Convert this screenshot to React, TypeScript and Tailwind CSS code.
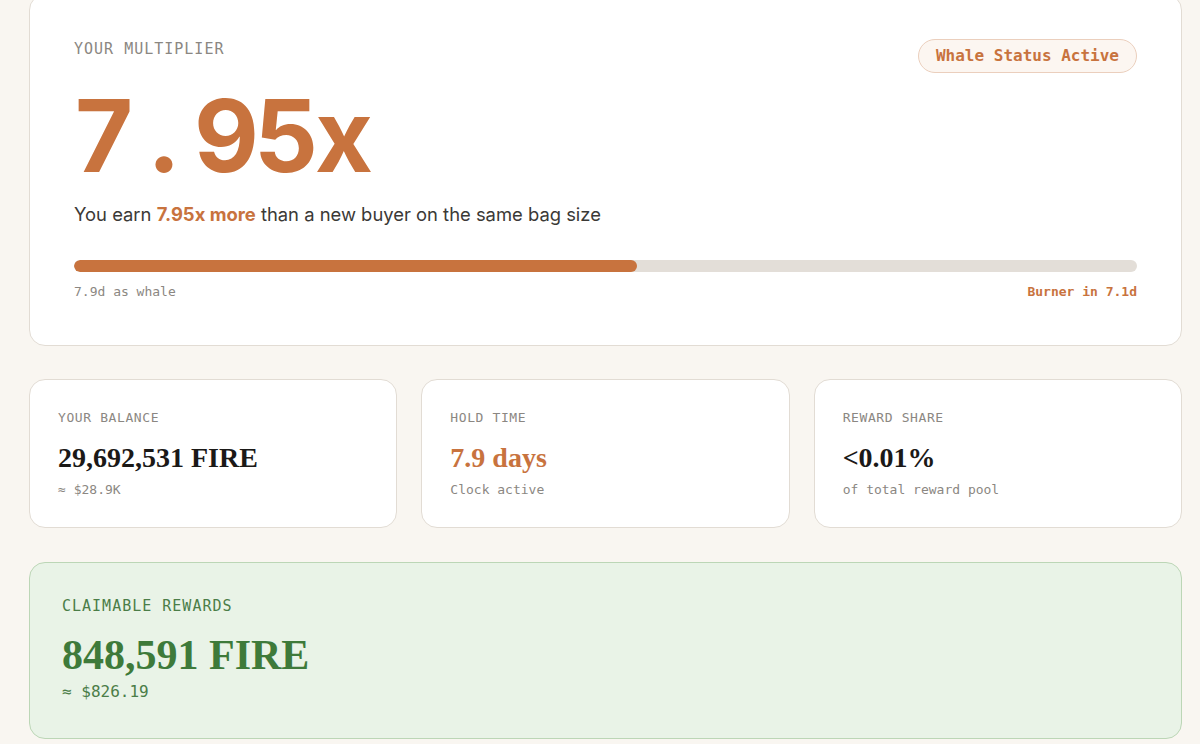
import * as React from "react";

const MONO = "font-['DejaVu_Sans_Mono','Liberation_Mono',monospace]";
const SANS = "font-['Inter','Liberation_Sans',sans-serif]";
const SERIF = "font-['Liberation_Serif','DejaVu_Serif',serif]";

const stats = [
  { label: "YOUR BALANCE", value: "29,692,531 FIRE", sub: "≈ $28.9K", accent: false },
  { label: "HOLD TIME", value: "7.9 days", sub: "Clock active", accent: true },
  { label: "REWARD SHARE", value: "<0.01%", sub: "of total reward pool", accent: false },
];

function StatCard({
  label,
  value,
  sub,
  accent,
}: {
  label: string;
  value: string;
  sub: string;
  accent: boolean;
}) {
  return (
    <div className="rounded-2xl border border-[#e2dcd4] bg-white px-7 pb-[27px] pt-7">
      <p className={`${MONO} text-[13px] leading-5 tracking-[0.6px] text-[#8b8782]`}>
        {label}
      </p>
      <p
        className={`${SERIF} mt-3 text-[28px] font-bold leading-9 ${
          accent ? "text-[#c8733e]" : "text-[#1b1917]"
        }`}
      >
        {value}
      </p>
      <p className={`${MONO} mt-1 text-[13px] leading-5 text-[#8b8782]`}>{sub}</p>
    </div>
  );
}

export default function App() {
  const progress = 53;
  const multiplier = "7.95x";

  return (
    <div className="min-h-screen overflow-hidden bg-[#f9f6f1] pb-10 pl-[29px] pr-[18px]">
      <section className="-mt-[6px] rounded-2xl border border-[#e2dcd4] bg-white px-11 pb-[43px] pt-11">
        <div className="flex items-start justify-between">
          <div>
            <p className={`${MONO} text-[15px] leading-5 tracking-[1px] text-[#8b8782]`}>
              YOUR MULTIPLIER
            </p>
            <p
              className={`${SANS} mt-[27px] flex text-[100px] font-bold leading-none text-[#c8733e]`}
            >
              {multiplier.split("").map((ch, i) => (
                <span key={i} className="inline-block w-[60px] text-center">
                  {ch}
                </span>
              ))}
            </p>
          </div>
          <span
            className={`${MONO} inline-flex h-[34px] items-center rounded-full border border-[#ebcfbd] bg-[#fcf6f1] px-[17px] text-base font-bold text-[#c8733e]`}
          >
            Whale Status Active
          </span>
        </div>

        <p className={`${SANS} mt-[14px] text-[18.4px] leading-7 text-[#3b3936]`}>
          You earn <span className="font-bold text-[#c8733e]">7.95x more</span> than a
          new buyer on the same bag size
        </p>

        <div className="mt-8 h-3 w-full overflow-hidden rounded-full bg-[#e3ded8]">
          <div
            className="h-full rounded-full bg-[#c8733e]"
            style={{ width: `${progress}%` }}
          />
        </div>
        <div className={`${MONO} mt-[10px] flex justify-between text-[13px] leading-5`}>
          <span className="text-[#8b8782]">7.9d as whale</span>
          <span className="font-bold text-[#c8733e]">Burner in 7.1d</span>
        </div>
      </section>

      <div className="mt-[33px] grid grid-cols-3 gap-6">
        {stats.map((s) => (
          <StatCard key={s.label} {...s} />
        ))}
      </div>

      <section className="mt-[34px] rounded-2xl border border-[#bcd6b6] bg-[#e9f3e7] px-8 pb-[34px] pt-[33px]">
        <p className={`${MONO} text-[15px] leading-5 tracking-[1px] text-[#4b7d48]`}>
          CLAIMABLE REWARDS
        </p>
        <p className={`${SERIF} mt-4 text-[42px] font-bold leading-[46px] text-[#3e7a3a]`}>
          848,591 FIRE
        </p>
        <p className={`${MONO} mt-[2px] text-base leading-6 text-[#4b7d48]`}>≈ $826.19</p>
      </section>
    </div>
  );
}
